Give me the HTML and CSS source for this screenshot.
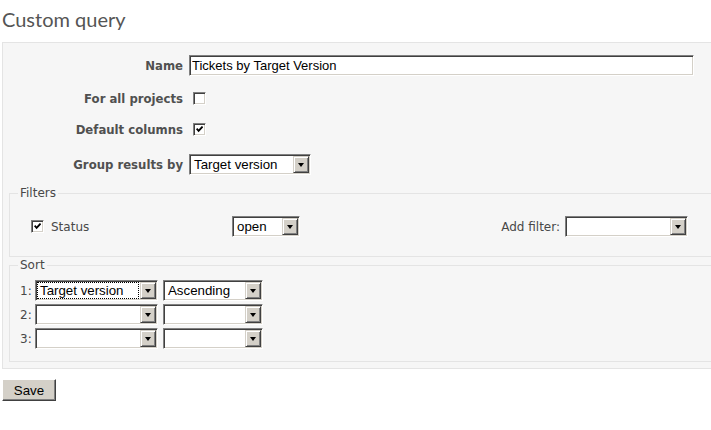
FILE: index.html
```html
<!DOCTYPE html>
<html>
<head>
<meta charset="utf-8">
<title>Custom query</title>
<link rel="stylesheet" href="styles.css">
</head>
<body>
<h2 class="title">Custom query</h2>
<div class="box">
  <div class="tabular">
    <div class="row r1">
      <label class="lbl">Name</label>
      <input class="txt" type="text" value="Tickets by Target Version">
    </div>
    <div class="row r2">
      <label class="lbl">For all projects</label>
      <span class="cb cb-tab"></span>
    </div>
    <div class="row r3">
      <label class="lbl">Default columns</label>
      <span class="cb cb-tab"><svg width="7" height="7" viewBox="0 0 7 7"><path d="M0.6 2.6 L2.6 4.8 L6.6 0.6" fill="none" stroke="#000" stroke-width="1.9"/></svg></span>
    </div>
    <div class="row r4">
      <label class="lbl">Group results by</label>
      <div class="sel w-group"><span class="sel-val">Target version</span><span class="sel-btn"></span></div>
    </div>
  </div>

  <fieldset class="fs filters">
    <legend>Filters</legend>
    <div class="filter-row">
      <div class="flt-name">
        <span class="cb cb-flt"><svg width="7" height="7" viewBox="0 0 7 7"><path d="M0.6 2.6 L2.6 4.8 L6.6 0.6" fill="none" stroke="#000" stroke-width="1.9"/></svg></span>
        <span>Status</span>
      </div>
      <div class="sel w-open"><span class="sel-val">open</span><span class="sel-btn"></span></div>
      <div class="add">
        <span class="add-lbl">Add filter:</span>
        <div class="sel w-add"><span class="sel-val"></span><span class="sel-btn"></span></div>
      </div>
    </div>
  </fieldset>

  <fieldset class="fs sort">
    <legend>Sort</legend>
    <div class="sort-rows">
      <div class="sort-row">
        <span class="num">1:</span>
        <div class="sel w-s1"><span class="sel-val focused">Target version</span><span class="sel-btn"></span></div>
        <div class="sel w-s2"><span class="sel-val">Ascending</span><span class="sel-btn"></span></div>
      </div>
      <div class="sort-row">
        <span class="num">2:</span>
        <div class="sel w-s1"><span class="sel-val"></span><span class="sel-btn"></span></div>
        <div class="sel w-s2"><span class="sel-val"></span><span class="sel-btn"></span></div>
      </div>
      <div class="sort-row">
        <span class="num">3:</span>
        <div class="sel w-s1"><span class="sel-val"></span><span class="sel-btn"></span></div>
        <div class="sel w-s2"><span class="sel-val"></span><span class="sel-btn"></span></div>
      </div>
    </div>
  </fieldset>
</div>
<button class="btn" type="button">Save</button>
</body>
</html>
```
FILE: styles.css
```css
html, body {
  margin: 0;
  padding: 0;
}
body {
  padding-left: 2px;
  font-family: "DejaVu Sans", Verdana, sans-serif;
  font-size: 12px;
  color: #484848;
  background: #fff;
  overflow: hidden;
}
.title {
  font-family: Lato, "Open Sans", sans-serif;
  font-size: 20px;
  font-weight: normal;
  line-height: 24px;
  color: #555;
  margin: 7px 0 11px 0;
}
.box {
  width: 760px;
  background: #f6f6f6;
  border: 1px solid #e4e4e4;
  padding: 10px 6px 6px 6px;
}
.row {
  display: flex;
  align-items: center;
  height: 25px;
}
.r2 { margin-top: 8px; }
.r3 { margin-top: 6px; }
.r4 { margin-top: 10px; }
.lbl {
  width: 174px;
  margin-right: 6px;
  text-align: right;
  font-weight: bold;
  font-size: 11.7px;
  color: #505050;
}
.txt {
  width: 505px;
  height: 21px;
  box-sizing: border-box;
  margin: 0;
  padding: 0 2px;
  background: #fff;
  border: 1px solid;
  border-color: #808080 #fff #fff #808080;
  box-shadow: inset 1px 1px #404040, inset -1px -1px #d4d0c8;
  font-family: "Liberation Sans", Arial, sans-serif;
  font-size: 13px;
  color: #000;
  outline: none;
}
.cb {
  width: 13px;
  height: 13px;
  box-sizing: border-box;
  flex: none;
  background: #fff;
  border: 1px solid;
  border-color: #808080 #fff #fff #808080;
  box-shadow: inset 1px 1px #404040, inset -1px -1px #d4d0c8;
  display: flex;
  align-items: center;
  justify-content: center;
}
.cb svg { display: block; }
.cb-tab { margin-left: 4px; }

.sel {
  display: flex;
  height: 21px;
  box-sizing: border-box;
  padding: 1px;
  background: #fff;
  border: 1px solid;
  border-color: #808080 #fff #fff #808080;
  box-shadow: inset 1px 1px #404040, inset -1px -1px #d4d0c8;
  font-family: "Liberation Sans", Arial, sans-serif;
  font-size: 13.3px;
  color: #000;
  flex: none;
}
.sel-val {
  flex: 1;
  min-width: 0;
  padding-left: 3px;
  line-height: 17px;
  white-space: nowrap;
  overflow: hidden;
}
.sel-val.focused {
  outline: 1px dotted #000;
  outline-offset: -1px;
  margin-right: 1px;
}
.sel-btn {
  width: 16px;
  height: 17px;
  box-sizing: border-box;
  flex: none;
  background: #d4d0c8;
  border: 1px solid;
  border-color: #d4d0c8 #404040 #404040 #d4d0c8;
  box-shadow: inset 1px 1px #fff, inset -1px -1px #808080;
  display: flex;
  align-items: center;
  justify-content: center;
}
.sel-btn::after {
  content: "";
  width: 0;
  height: 0;
  border-left: 3.5px solid transparent;
  border-right: 3.5px solid transparent;
  border-top: 4px solid #000;
  margin-top: 1px;
}
.w-group { width: 122px; }
.w-open { width: 68px; }
.w-add { width: 123px; }
.w-s1 { width: 123px; }
.w-s2 { width: 100px; margin-left: 5px; }

.fs {
  margin: 0;
  min-width: 0;
  border: 1px solid #e4e4e4;
  padding: 14px 8px 17px 8px;
}
.fs legend {
  padding: 0 2px;
  font-size: 12px;
  line-height: 14px;
  color: #484848;
}
.filters { margin-top: 9px; }
.sort {
  margin-top: 1px;
  padding: 8px 8px 12px 8px;
}
.filter-row {
  display: flex;
  align-items: center;
  height: 25px;
  width: 670px;
}
.flt-name {
  width: 214px;
  display: flex;
  align-items: center;
  flex: none;
}
.cb-flt {
  margin-left: 13px;
  margin-right: 7px;
}
.add {
  margin-left: auto;
  display: flex;
  align-items: center;
}
.add-lbl { margin-right: 5px; }

.sort-rows {
  display: flex;
  flex-direction: column;
  gap: 3px;
}
.sort-row {
  display: flex;
  align-items: center;
  height: 21px;
}
.num {
  width: 15px;
  padding-left: 2px;
  flex: none;
}
.btn {
  display: block;
  margin: 10px 0 0 0;
  width: 54px;
  height: 22px;
  padding: 0;
  background: #d4d0c8;
  border: 1px solid;
  border-color: #fff #404040 #404040 #fff;
  box-shadow: inset -1px -1px #808080;
  font-family: "Liberation Sans", Arial, sans-serif;
  font-size: 13.3px;
  color: #000;
}
```
